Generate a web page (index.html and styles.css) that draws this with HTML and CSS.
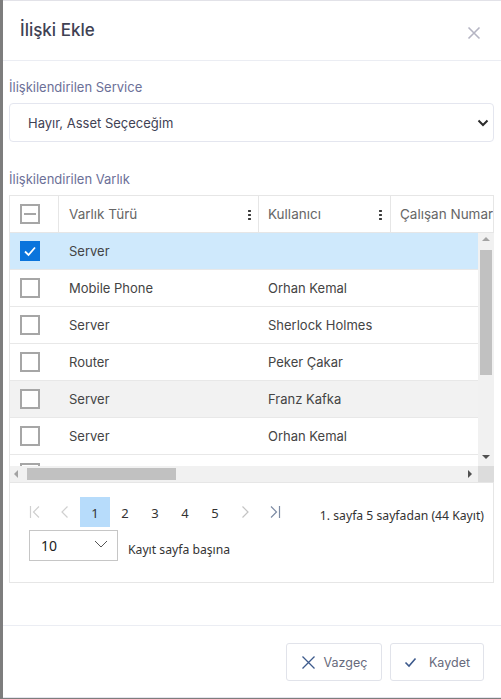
FILE: index.html
```html
<!DOCTYPE html>
<html lang="tr">
<head>
<meta charset="utf-8">
<link rel="stylesheet" href="styles.css">
</head>
<body>
<div class="modal">
  <header class="mhead">
    <h1 class="title">İlişki Ekle</h1>
    <button class="close" aria-label="Kapat">
      <svg width="14" height="14" viewBox="0 0 14 14"><path d="M1.5 1.5L12.5 12.5M12.5 1.5L1.5 12.5" stroke="#b5b5c3" stroke-width="1.6" fill="none"/></svg>
    </button>
  </header>
  <div class="mbody">
    <div class="flabel">İlişkilendirilen Service</div>
    <div class="select">
      <span>Hayır, Asset Seçeceğim</span>
      <svg width="12" height="8" viewBox="0 0 12 8"><path d="M1.5 1.5L6 6L10.5 1.5" stroke="#2b2b2b" stroke-width="2" fill="none"/></svg>
    </div>
    <div class="flabel second">İlişkilendirilen Varlık</div>
    <div class="grid">
      <div class="ghead">
        <div class="hc c0"><span class="cb ind"></span></div>
        <div class="hc c1"><span>Varlık Türü</span><i class="kebab"></i></div>
        <div class="hc c2"><span>Kullanıcı</span><i class="kebab"></i></div>
        <div class="hc c3"><span>Çalışan Numarası</span></div>
      </div>
      <div class="gbody">
        <div class="rows">
          <div class="row sel"><div class="c c0"><span class="cb on"><svg width="14" height="12" viewBox="0 0 14 12"><path d="M2 6.5L5.5 10L12 2.5" stroke="#fff" stroke-width="1.8" fill="none"/></svg></span></div><div class="c c1">Server</div><div class="c c2"></div><div class="c c3"></div></div>
          <div class="row"><div class="c c0"><span class="cb"></span></div><div class="c c1">Mobile Phone</div><div class="c c2">Orhan Kemal</div><div class="c c3"></div></div>
          <div class="row"><div class="c c0"><span class="cb"></span></div><div class="c c1">Server</div><div class="c c2">Sherlock Holmes</div><div class="c c3"></div></div>
          <div class="row"><div class="c c0"><span class="cb"></span></div><div class="c c1">Router</div><div class="c c2">Peker Çakar</div><div class="c c3"></div></div>
          <div class="row hover"><div class="c c0"><span class="cb"></span></div><div class="c c1">Server</div><div class="c c2">Franz Kafka</div><div class="c c3"></div></div>
          <div class="row"><div class="c c0"><span class="cb"></span></div><div class="c c1">Server</div><div class="c c2">Orhan Kemal</div><div class="c c3"></div></div>
          <div class="row"><div class="c c0"><span class="cb"></span></div><div class="c c1"></div><div class="c c2"></div><div class="c c3"></div></div>
        </div>
        <div class="vscroll">
          <span class="arr up"></span>
          <span class="vthumb"></span>
          <span class="arr down"></span>
        </div>
        <div class="hscroll">
          <span class="arr left"></span>
          <span class="hthumb"></span>
          <span class="arr right"></span>
        </div>
        <div class="corner"></div>
      </div>
      <div class="pager">
        <div class="prow">
          <div class="pnav">
            <span class="pb arrow"><svg width="12" height="14" viewBox="0 0 12 14"><path d="M1.5 1v12M10 1.5L4.5 7L10 12.5" stroke="#d0d0d0" stroke-width="1.2" fill="none"/></svg></span>
            <span class="pb arrow"><svg width="10" height="14" viewBox="0 0 10 14"><path d="M7.5 1.5L2 7L7.5 12.5" stroke="#d0d0d0" stroke-width="1.2" fill="none"/></svg></span>
            <span class="pb cur">1</span>
            <span class="pb">2</span>
            <span class="pb">3</span>
            <span class="pb">4</span>
            <span class="pb">5</span>
            <span class="pb arrow"><svg width="10" height="14" viewBox="0 0 10 14"><path d="M2.5 1.5L8 7L2.5 12.5" stroke="#c4c4c4" stroke-width="1.2" fill="none"/></svg></span>
            <span class="pb arrow"><svg width="12" height="14" viewBox="0 0 12 14"><path d="M2 1.5L7.5 7L2 12.5M10.5 1v12" stroke="#7d8ba3" stroke-width="1.2" fill="none"/></svg></span>
          </div>
          <div class="pinfo">1. sayfa 5 sayfadan (44 Kayıt)</div>
        </div>
        <div class="psize">
          <div class="psel"><span>10</span><svg width="14" height="8" viewBox="0 0 14 8"><path d="M1 1L7 7L13 1" stroke="#555" stroke-width="1" fill="none"/></svg></div>
          <span class="plabel">Kayıt sayfa başına</span>
        </div>
      </div>
    </div>
  </div>
  <footer class="mfoot">
    <button class="btn"><svg width="15" height="15" viewBox="0 0 15 15"><path d="M1.5 1.5L13.5 13.5M13.5 1.5L1.5 13.5" stroke="#3d5a8c" stroke-width="1.3" fill="none"/></svg><span>Vazgeç</span></button>
    <button class="btn ok"><svg width="13" height="11" viewBox="0 0 13 11"><path d="M1.5 5.5L5 9L11.5 1.5" stroke="#3d5a8c" stroke-width="1.6" fill="none"/></svg><span>Kaydet</span></button>
  </footer>
</div>
</body>
</html>
```

FILE: styles.css
```css
* { box-sizing: border-box; }
html, body { margin: 0; padding: 0; }
body {
  background: #7d7d7d;
  font-family: "Inter", "Open Sans", sans-serif;
  width: 501px;
  height: 699px;
  overflow: hidden;
}
.modal {
  margin-left: 3px;
  width: 498px;
  height: 698px;
  background: #fff;
  border-top: 1px solid #e2e2e8;
  border-bottom: 1px solid #e4e4ec;
  display: flex;
  flex-direction: column;
}
.mhead {
  height: 60px;
  flex: none;
  border-bottom: 1px solid #ebedf3;
  display: flex;
  align-items: center;
  justify-content: space-between;
  padding: 0 20px 0 17px;
}
.title {
  margin: 0;
  font-size: 17px;
  font-weight: 500;
  color: #3f4254;
  position: relative;
  top: -1px;
}
.close {
  border: 0;
  background: none;
  padding: 0;
  width: 14px;
  height: 14px;
  display: flex;
  position: relative;
  top: 2px;
}
.mbody {
  flex: 1;
  padding: 16px 7px 0 6px;
}
.flabel {
  font-size: 13px;
  line-height: 20px;
  color: #6c7098;
  margin-bottom: 6px;
}
.flabel.second { margin-top: 27px; }
.select {
  height: 39px;
  border: 1px solid #e4e6ef;
  border-radius: 4px;
  display: flex;
  align-items: center;
  justify-content: space-between;
  padding: 0 4px 0 18px;
  font-size: 13px;
  color: #3f4254;
}
.grid {
  border: 1px solid #e6e6e6;
  width: 485px;
}
.ghead {
  display: flex;
  height: 37px;
  border-bottom: 1px solid #e6e6e6;
  overflow: hidden;
}
.hc {
  flex: none;
  display: flex;
  align-items: center;
  justify-content: space-between;
  font-size: 13.5px;
  color: #666;
  border-right: 1px solid #e6e6e6;
  white-space: nowrap;
}
.c0 { width: 49px; padding-left: 10px; }
.c1 { width: 200px; padding-left: 10px; padding-right: 7px; }
.c2 { width: 132px; padding-left: 9px; padding-right: 8px; }
.c3 { width: 140px; padding-left: 9px; border-right: 0; }
.kebab {
  width: 3px;
  height: 11px;
  background: radial-gradient(circle, #3a3a3a 1.1px, transparent 1.3px) 0 0 / 3px 4px repeat-y;
}
.cb {
  width: 20px;
  height: 20px;
  border: 2px solid #a6a6a6;
  background: #fff;
  display: flex;
  align-items: center;
  justify-content: center;
  flex: none;
}
.cb.ind::after {
  content: "";
  width: 12px;
  height: 2px;
  background: #a6a6a6;
}
.cb.on {
  background: #0a74dc;
  border-color: #0a74dc;
}
.gbody {
  display: grid;
  grid-template-columns: 468px 16px;
  grid-template-rows: 233px 16px;
}
.rows {
  overflow: hidden;
}
.row {
  display: flex;
  height: 37px;
  border-bottom: 1px solid #e8e8e8;
}
.row.sel { background: #cfe9fc; }
.row.hover { background: #f2f2f2; }
.c {
  flex: none;
  display: flex;
  align-items: center;
  font-size: 13px;
  color: #444;
  white-space: nowrap;
}
.vscroll {
  background: #f1f1f1;
  position: relative;
}
.vthumb {
  position: absolute;
  left: 2px;
  right: 2px;
  top: 17px;
  height: 125px;
  background: #c1c1c1;
}
.hscroll {
  background: #f1f1f1;
  position: relative;
}
.hthumb {
  position: absolute;
  top: 2px;
  bottom: 2px;
  left: 17px;
  width: 149px;
  background: #c1c1c1;
}
.corner { background: #dcdcdc; }
.arr {
  position: absolute;
  width: 0;
  height: 0;
  border: 4px solid transparent;
}
.arr.up { left: 4px; top: 4px; border-bottom-color: #a3a3a3; border-top-width: 0; }
.arr.down { left: 4px; bottom: 7px; border-top-color: #505050; border-bottom-width: 0; }
.arr.left { top: 4px; left: 4px; border-right-color: #a3a3a3; border-left-width: 0; }
.arr.right { top: 4px; right: 6px; border-left-color: #505050; border-right-width: 0; }
.pager {
  height: 100px;
  border-top: 1px solid #e6e6e6;
  padding: 14px 9px 0 10px;
  font-family: "Noto Sans", "Open Sans", sans-serif;
  color: #333;
}
.prow {
  display: flex;
  align-items: center;
  justify-content: space-between;
}
.pnav { display: flex; }
.pb {
  width: 30px;
  height: 30px;
  display: flex;
  align-items: center;
  justify-content: center;
  font-size: 13px;
  color: #333;
  padding-top: 2px;
}
.pb.arrow { padding-top: 0; }
.pb.cur { background: #b7dcfb; }
.pinfo {
  font-size: 12.2px;
  color: #333;
  position: relative;
  top: 3px;
}
.psize {
  display: flex;
  align-items: center;
  gap: 10px;
  margin-top: 3px;
  padding-left: 9px;
}
.psel {
  width: 89px;
  height: 31px;
  border: 1px solid #c6c6c6;
  display: flex;
  align-items: center;
  justify-content: space-between;
  padding: 0 9px 0 11px;
  font-size: 14px;
  color: #222;
}
.psel svg { position: relative; top: -2px; }
.plabel {
  font-size: 12.2px;
  color: #333;
  position: relative;
  top: 4px;
}
.mfoot {
  flex: none;
  height: 72px;
  border-top: 1px solid #ebedf3;
  display: flex;
  justify-content: flex-end;
  align-items: flex-start;
  gap: 8px;
  padding: 17px 17px 0 0;
}
.btn {
  height: 38px;
  width: 96px;
  border: 1px solid #e1e3ea;
  border-radius: 3px;
  background: #fff;
  display: flex;
  align-items: center;
  justify-content: center;
  gap: 8px;
  font-family: "Inter", "Open Sans", sans-serif;
  font-size: 12.5px;
  color: #676a7c;
  padding: 0;
}
.btn.ok { width: 94px; gap: 12px; }
```
